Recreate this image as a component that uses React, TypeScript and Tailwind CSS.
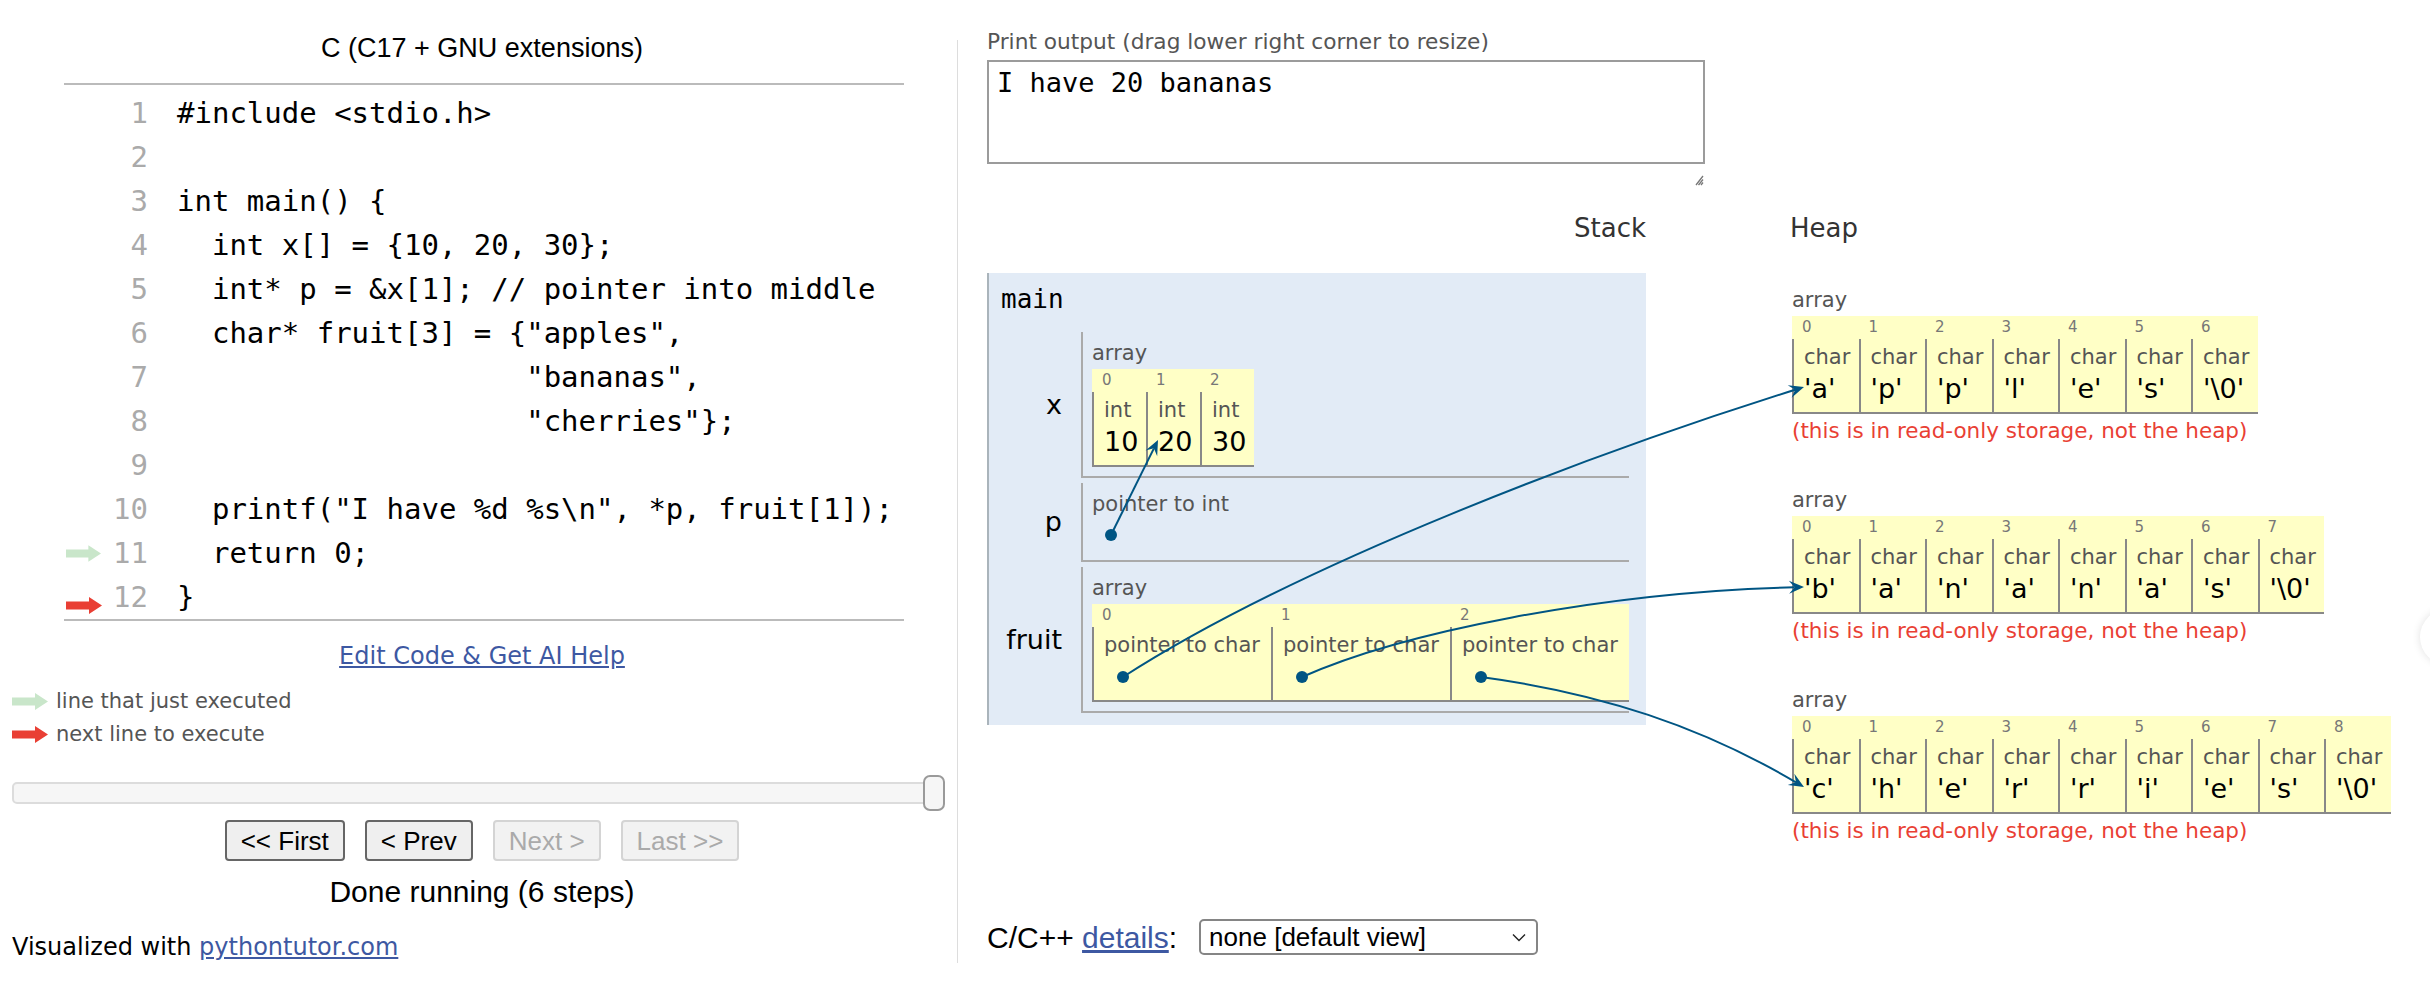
import React, { useLayoutEffect, useRef, useState } from 'react';

const SANS = "font-['DejaVu_Sans',Verdana,sans-serif]";
const MONO = "font-['DejaVu_Sans_Mono',Menlo,monospace]";
const ARIAL = "font-['Liberation_Sans',Arial,sans-serif]";

const codeLines = [
  '#include <stdio.h>',
  '',
  'int main() {',
  '  int x[] = {10, 20, 30};',
  '  int* p = &x[1]; // pointer into middle',
  '  char* fruit[3] = {"apples",',
  '                    "bananas",',
  '                    "cherries"};',
  '',
  '  printf("I have %d %s\\n", *p, fruit[1]);',
  '  return 0;',
  '}',
];

function GutterArrow({ color }: { color: string }) {
  return (
    <svg width="36" height="17" viewBox="0 0 36 17">
      <path d="M0 4.5H23V0L36 8.5L23 17V12.5H0Z" fill={color} />
    </svg>
  );
}

type Cell = {
  type: string;
  value?: string;
  dotRef?: React.RefObject<HTMLSpanElement | null>;
  valueRef?: React.RefObject<HTMLDivElement | null>;
};

function ArrayBox({ cells, widthClass }: { cells: Cell[]; widthClass: string }) {
  return (
    <div className={`inline-flex bg-[#ffffc6] ${SANS}`}>
      {cells.map((c, i) => (
        <div key={i} className={`flex flex-col ${widthClass}`}>
          <div className="h-[23px] pl-[10px] text-[15px] leading-[23px] text-[#777]">{i}</div>
          <div className="border-l-2 border-b-2 border-[#888] pl-[10px] pt-[6px] pb-[3px]">
            <div className="text-[21px] leading-[24px] text-[#555] whitespace-nowrap">{c.type}</div>
            <div ref={c.valueRef} className="h-[40px] flex items-center text-[27px] leading-[40px] text-black whitespace-nowrap">
              {c.dotRef ? (
                <span ref={c.dotRef} className="ml-[13px] inline-block w-[12px] h-[12px] rounded-full bg-[#005583]" />
              ) : (
                c.value
              )}
            </div>
          </div>
        </div>
      ))}
    </div>
  );
}

function HeapObject({ chars, targetRef }: { chars: string[]; targetRef: React.RefObject<HTMLDivElement | null> }) {
  const cells: Cell[] = chars.map((ch, i) => ({ type: 'char', value: ch, valueRef: i === 0 ? targetRef : undefined }));
  return (
    <div className={`pl-[2px] mt-[43px] ${SANS}`}>
      <div className="text-[21px] leading-[26px] text-[#555]">array</div>
      <div className="mt-[2px]">
        <ArrayBox cells={cells} widthClass="w-[66.5px]" />
      </div>
      <div className="mt-[4px] text-[21.5px] leading-[26px] text-[#e93f34] whitespace-nowrap">
        (this is in read-only storage, not the heap)
      </div>
    </div>
  );
}

type Arrow = { d: string; head: string };

function headPoly(tip: number[], from: number[]) {
  const dx = tip[0] - from[0];
  const dy = tip[1] - from[1];
  const len = Math.hypot(dx, dy) || 1;
  const ux = dx / len;
  const uy = dy / len;
  const px = -uy;
  const py = ux;
  const L = 15;
  const W = 6.5;
  const bx = tip[0] - ux * L;
  const by = tip[1] - uy * L;
  const nx = tip[0] - ux * L * 0.62;
  const ny = tip[1] - uy * L * 0.62;
  return {
    poly: `${tip[0]},${tip[1]} ${bx + px * W},${by + py * W} ${nx},${ny} ${bx - px * W},${by - py * W}`,
    notch: [nx, ny],
  };
}

export default function App() {
  const rootRef = useRef<HTMLDivElement>(null);
  const pDot = useRef<HTMLSpanElement>(null);
  const f0 = useRef<HTMLSpanElement>(null);
  const f1 = useRef<HTMLSpanElement>(null);
  const f2 = useRef<HTMLSpanElement>(null);
  const xTarget = useRef<HTMLDivElement>(null);
  const h0 = useRef<HTMLDivElement>(null);
  const h1 = useRef<HTMLDivElement>(null);
  const h2 = useRef<HTMLDivElement>(null);
  const [arrows, setArrows] = useState<Arrow[]>([]);

  useLayoutEffect(() => {
    const compute = () => {
      const root = rootRef.current;
      if (!root) return;
      const r = root.getBoundingClientRect();
      const ctr = (el: Element | null) => {
        if (!el) return [0, 0];
        const b = el.getBoundingClientRect();
        return [b.left - r.left + b.width / 2, b.top - r.top + b.height / 2];
      };
      const tgt = (el: Element | null) => {
        if (!el) return [0, 0];
        const b = el.getBoundingClientRect();
        return [b.left - r.left, b.top - r.top + b.height / 2 - 2];
      };
      const out: Arrow[] = [];
      {
        const p0 = ctr(pDot.current);
        const p3 = tgt(xTarget.current);
        const h = headPoly(p3, p0);
        out.push({ d: `M${p0[0]},${p0[1]} L${h.notch[0]},${h.notch[1]}`, head: h.poly });
      }
      const curve = (src: Element | null, dst: Element | null, c1: number[], c2: number[]) => {
        const p0 = ctr(src);
        const p3 = tgt(dst);
        const p1 = [p0[0] + c1[0], p0[1] + c1[1]];
        const p2 = [p3[0] + c2[0], p3[1] + c2[1]];
        const h = headPoly(p3, p2);
        out.push({
          d: `M${p0[0]},${p0[1]} C${p1[0]},${p1[1]} ${p2[0]},${p2[1]} ${h.notch[0]},${h.notch[1]}`,
          head: h.poly,
        });
      };
      curve(f0.current, h0.current, [177, -114], [-204, 64]);
      curve(f1.current, h1.current, [98, -44], [-204, 5]);
      curve(f2.current, h2.current, [120, 16], [-102, -60]);
      setArrows(out);
    };
    compute();
    const fonts = (document as any).fonts;
    if (fonts && fonts.ready) fonts.ready.then(compute);
    window.addEventListener('resize', compute);
    const t = window.setTimeout(compute, 300);
    return () => {
      window.removeEventListener('resize', compute);
      window.clearTimeout(t);
    };
  }, []);

  return (
    <div ref={rootRef} className="relative w-[2430px] h-[982px] overflow-hidden bg-white flex text-black">
      {/* LEFT PANE */}
      <div className="w-[957px] shrink-0 flex flex-col">
        <div className={`w-[964px] pt-[32px] text-center text-[27px] leading-[32px] ${ARIAL}`}>C (C17 + GNU extensions)</div>

        <div className="ml-[64px] w-[840px] mt-[19px] border-t-2 border-b-2 border-[#bbb] pt-[6px]">
          {codeLines.map((line, i) => (
            <div key={i} className="flex items-center h-[44px]">
              <div className="w-[37px] pl-[2px] flex items-center">
                {i === 10 && <GutterArrow color="#c9e6ca" />}
                {i === 11 && (
                  <div className="translate-y-[8px]">
                    <GutterArrow color="#e93f34" />
                  </div>
                )}
              </div>
              <div className={`w-[47px] text-right text-[29px] leading-[44px] text-[#aaa] ${MONO}`}>{i + 1}</div>
              <div className={`ml-[29px] whitespace-pre text-[29px] leading-[44px] text-black ${MONO}`}>{line}</div>
            </div>
          ))}
        </div>

        <div className="w-[964px] mt-[20px] text-center leading-[30px]">
          <a className={`text-[24px] underline text-[#3d58a2] ${SANS}`}>Edit Code &amp; Get AI Help</a>
        </div>

        <div className={`mt-[12px] pl-[12px] flex flex-col text-[21px] text-[#555] ${SANS}`}>
          <div className="h-[33px] flex items-center gap-[8px]">
            <GutterArrow color="#c9e6ca" />
            <span>line that just executed</span>
          </div>
          <div className="h-[33px] flex items-center gap-[8px]">
            <GutterArrow color="#e93f34" />
            <span>next line to execute</span>
          </div>
        </div>

        <div className="mt-[24px] ml-[12px] w-[933px] h-[36px] flex items-center">
          <div className="flex-1 h-[22px] rounded-[5px] border-2 border-[#dcdcdc] bg-[#f6f6f6]" />
          <div className="ml-[-22px] w-[22px] h-[36px] rounded-[7px] border-2 border-[#9a9a9a] bg-[#f6f6f6]" />
        </div>

        <div className={`w-[964px] mt-[9px] flex justify-center gap-[20px] ${ARIAL}`}>
          <button className="h-[41px] px-[14px] border-2 border-[#666] rounded-[4px] bg-[#efefef] text-[26px] leading-none text-black">&lt;&lt; First</button>
          <button className="h-[41px] px-[14px] border-2 border-[#666] rounded-[4px] bg-[#efefef] text-[26px] leading-none text-black">&lt; Prev</button>
          <button className="h-[41px] px-[14px] border-2 border-[#d4d4d4] rounded-[4px] bg-[#f2f2f2] text-[26px] leading-none text-[#aaa]">Next &gt;</button>
          <button className="h-[41px] px-[14px] border-2 border-[#d4d4d4] rounded-[4px] bg-[#f2f2f2] text-[26px] leading-none text-[#aaa]">Last &gt;&gt;</button>
        </div>

        <div className={`w-[964px] mt-[13px] text-center text-[30px] leading-[36px] ${ARIAL}`}>Done running (6 steps)</div>

        <div className={`mt-[22px] pl-[12px] text-[24px] leading-[30px] ${SANS}`}>
          Visualized with <a className="underline text-[#3d58a2]">pythontutor.com</a>
        </div>
      </div>

      {/* DIVIDER */}
      <div className="w-px shrink-0 mt-[40px] h-[923px] bg-[#dddddd]" />

      {/* RIGHT PANE */}
      <div className="flex-1 pl-[29px] flex flex-col">
        <div className={`pt-[28px] text-[21.7px] leading-[28px] text-[#555] ${SANS}`}>Print output (drag lower right corner to resize)</div>
        <div className={`mt-[4px] w-[718px] h-[104px] border-2 border-[#9b9b9b] pl-[8px] pt-[5px] text-[27px] leading-[32px] ${MONO}`}>
          I have 20 bananas
        </div>
        <div className="w-[718px] h-[24px] flex justify-end items-start">
          <svg className="mt-[10px] mr-[1px]" width="11" height="12" viewBox="0 0 11 12">
            <path d="M10 2L3 11M10 5.5L5.5 11M10 8.5L8 11" stroke="#777" strokeWidth="1.3" />
          </svg>
        </div>

        <div className="mt-[24px] flex items-start">
          {/* STACK */}
          <div className="w-[659px] shrink-0">
            <div className={`text-right text-[26px] leading-[32px] text-[#333] ${SANS}`}>Stack</div>
            <div className="mt-[29px] bg-[#e2ebf6] border-l-2 border-[#aab4bb] pr-[17px] pb-[12px]">
              <div className={`pl-[12px] pt-[11px] text-[26px] leading-[30px] ${MONO}`}>main</div>
              <div className={`mt-[18px] flex flex-col gap-[5px] ${SANS}`}>
                {/* x */}
                <div className="flex">
                  <div className="w-[92px] shrink-0 pr-[19px] flex items-center justify-end text-[27px]">x</div>
                  <div className="flex-1 border-l-2 border-b-2 border-[#aaa] pl-[9px] pt-[8px] pb-[9px]">
                    <div className="text-[21px] leading-[26px] text-[#555]">array</div>
                    <div className="mt-[2px]">
                      <ArrayBox
                        widthClass="w-[54px]"
                        cells={[
                          { type: 'int', value: '10' },
                          { type: 'int', value: '20', valueRef: xTarget },
                          { type: 'int', value: '30' },
                        ]}
                      />
                    </div>
                  </div>
                </div>
                {/* p */}
                <div className="flex">
                  <div className="w-[92px] shrink-0 pr-[19px] flex items-center justify-end text-[27px]">p</div>
                  <div className="flex-1 border-l-2 border-b-2 border-[#aaa] pl-[9px] pt-[8px] pb-[7px]">
                    <div className="text-[21px] leading-[26px] text-[#555]">pointer to int</div>
                    <div className="h-[36px] flex items-center">
                      <span ref={pDot} className="ml-[13px] inline-block w-[12px] h-[12px] rounded-full bg-[#005583]" />
                    </div>
                  </div>
                </div>
                {/* fruit */}
                <div className="flex">
                  <div className="w-[92px] shrink-0 pr-[19px] flex items-center justify-end text-[27px]">fruit</div>
                  <div className="flex-1 border-l-2 border-b-2 border-[#aaa] pl-[9px] pt-[8px] pb-[9px]">
                    <div className="text-[21px] leading-[26px] text-[#555]">array</div>
                    <div className="mt-[2px]">
                      <ArrayBox
                        widthClass="w-[179px]"
                        cells={[
                          { type: 'pointer to char', dotRef: f0 },
                          { type: 'pointer to char', dotRef: f1 },
                          { type: 'pointer to char', dotRef: f2 },
                        ]}
                      />
                    </div>
                  </div>
                </div>
              </div>
            </div>
          </div>

          {/* HEAP */}
          <div className="ml-[144px] flex flex-col">
            <div className={`text-[26px] leading-[32px] text-[#333] ${SANS}`}>Heap</div>
            <HeapObject chars={["'a'", "'p'", "'p'", "'l'", "'e'", "'s'", "'\\0'"]} targetRef={h0} />
            <HeapObject chars={["'b'", "'a'", "'n'", "'a'", "'n'", "'a'", "'s'", "'\\0'"]} targetRef={h1} />
            <HeapObject chars={["'c'", "'h'", "'e'", "'r'", "'r'", "'i'", "'e'", "'s'", "'\\0'"]} targetRef={h2} />
          </div>
        </div>

        <div className={`mt-[75px] h-[36px] flex items-center text-[30px] ${ARIAL}`}>
          <span>C/C++&nbsp;</span>
          <a className="underline text-[#3d58a2]">details</a>
          <span>:</span>
          <div className="ml-[22px] w-[339px] h-[36px] border-2 border-[#858585] rounded-[5px] flex items-center justify-between pl-[8px] pr-[10px] bg-white">
            <span className="text-[26px] leading-none">none [default view]</span>
            <svg width="14" height="9" viewBox="0 0 14 9">
              <path d="M1 1.5L7 7.5L13 1.5" stroke="#222" strokeWidth="1.4" fill="none" />
            </svg>
          </div>
        </div>
      </div>

      {/* ARROWS OVERLAY */}
      <svg className="absolute inset-0 pointer-events-none" width="2430" height="982">
        {arrows.map((a, i) => (
          <g key={i}>
            <path d={a.d} stroke="#005583" strokeWidth="2" fill="none" />
            <polygon points={a.head} fill="#005583" />
          </g>
        ))}
      </svg>

      <div className="absolute left-[2420px] top-[609px] w-[56px] h-[56px] rounded-full bg-white shadow-[0_0_8px_rgba(0,0,0,0.12)]" />
    </div>
  );
}
